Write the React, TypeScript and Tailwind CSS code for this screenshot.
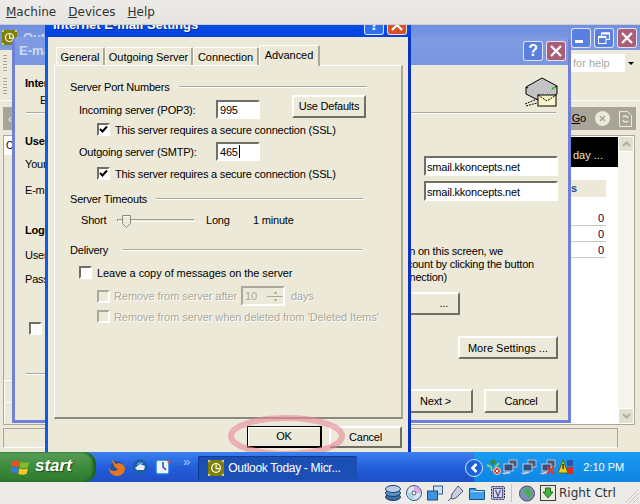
import type { ReactNode } from "react";

const sunken = "border-2 border-t-[#716f64] border-l-[#716f64] border-r-white border-b-white";
const raised = "border-2 border-t-white border-l-white border-r-[#716f64] border-b-[#716f64] flex items-center justify-center";

const OutlookIcon = ({ size = 15 }: { size?: number }) => (
  <svg width={size} height={size} viewBox="0 0 15 15" className="shrink-0">
    <rect width="15" height="15" fill="#7f7f00" />
    <path d="M0 0h2v2H0zM13 0h2v2h-2zM0 13h2v2H0zM13 13h2v2h-2z" fill="#c8c89a" />
    <circle cx="7.5" cy="7.5" r="4.6" fill="#fff" />
    <circle cx="7.5" cy="7.5" r="3.4" fill="#7f7f00" />
    <path d="M7 4.5h1.2v3h2.3v1.2H7z" fill="#fff" />
  </svg>
);

const TitleButton = ({ kind, tone, w = 20, h = 20 }: { kind: string; tone: string; w?: number; h?: number }) => (
  <div
    className={`flex items-center justify-center rounded-[3px] border border-white/80 text-white ${tone}`}
    style={{ width: w, height: h }}
  >
    {kind === "help" && <span className="font-['Liberation_Sans'] text-[16px] font-bold leading-none">?</span>}
    {kind === "close" && (
      <svg width="12" height="12" viewBox="0 0 12 12">
        <path d="M1 1l10 10M11 1L1 11" stroke="#fff" strokeWidth="2.2" />
      </svg>
    )}
    {kind === "min" && <div className="mt-[8px] h-[3px] w-[8px] -translate-x-[2px] bg-white" />}
    {kind === "max" && (
      <svg width="12" height="12" viewBox="0 0 12 12" fill="none" stroke="#fff">
        <rect x="3.5" y="1" width="8" height="6.5" strokeWidth="1" />
        <path d="M3.5 1.5h8" strokeWidth="2" />
        <rect x="0.5" y="4.5" width="7.5" height="7" fill="#5a7fe0" />
        <path d="M0.5 5h7.5" strokeWidth="2" />
      </svg>
    )}
  </div>
);

const CheckBox = ({ checked, disabled }: { checked?: boolean; disabled?: boolean }) => (
  <div
    className={`flex h-[13px] w-[13px] shrink-0 items-center justify-center border-2 border-r-white border-b-white ${
      disabled ? "border-t-[#aca899] border-l-[#aca899] bg-[#ece9d8]" : "border-t-[#716f64] border-l-[#716f64] bg-white"
    }`}
  >
    {checked && (
      <svg width="9" height="9" viewBox="0 0 9 9">
        <path d="M1 4l2.5 2.5L8 1.5" fill="none" stroke="#000" strokeWidth="2" />
      </svg>
    )}
  </div>
);

const Section = ({ title, className }: { title: string; className: string }) => (
  <div className="flex h-[14px] w-[297px] items-center">
    <span className="whitespace-nowrap">{title}</span>
    <div className={`h-[2px] flex-1 border-t border-t-[#aca899] border-b border-b-white ${className}`} />
  </div>
);

const PortField = ({ value, caret }: { value: string; caret?: boolean }) => (
  <div className={`flex h-[19px] w-[44px] items-center bg-white pl-[2px] ${sunken}`}>
    <span className="pt-[2px]">{value}</span>
    {caret && <div className="ml-px h-[13px] w-px bg-black" />}
  </div>
);

const ServerIcon = () => (
  <svg width="33" height="30" viewBox="0 0 33 30" className="shrink-0">
    <path d="M1 10L17 1l15 8v8L17 25 1 17z" fill="#c4c4c4" stroke="#000" />
    <path d="M1 10l16 8 15-9M17 18v7" fill="none" stroke="#000" />
    <path d="M3 11l14 7 13-8" fill="none" stroke="#fff" />
    <path d="M27 11l3-2v2l-3 2z" fill="#2fc02f" />
    <rect x="13" y="18" width="18" height="11" fill="#fbf6c8" stroke="#000" />
    <path d="M13 18l9 6 9-6" fill="none" stroke="#000" strokeDasharray="2 1" />
    <path d="M0 27l12-5M1 29l11-3" stroke="#000" strokeDasharray="2 1" />
  </svg>
);

const WinFlag = () => (
  <svg width="19" height="19" viewBox="0 0 19 19" className="shrink-0">
    <path d="M1 3.5c2.5-1.2 5-1.2 7.5 0L7.5 9C5 7.8 2.500 7.800 0 9z" fill="#e8502a" />
    <path d="M9.500 3.800c2.500 1.200 5.500 1.200 8.500 0l-1 5.500c-3 1.200-6 1.200-8.500 0z" fill="#7fbf2a" />
    <path d="M0 10c2.500-1.200 5-1.200 7.300 0l-1 5.500c-2.300-1.200-4.800-1.200-7.300 0z" fill="#3a7ae0" />
    <path d="M8.300 10.300c2.500 1.200 5.500 1.200 8.500 0l-1 5.500c-3 1.200-6 1.200-8.500 0z" fill="#f5c52a" />
  </svg>
);

const Pc = ({ cross }: { cross?: boolean }) => (
  <svg width="16" height="16" viewBox="0 0 16 16" className="shrink-0">
    <rect x="7" y="1" width="8" height="7" fill="#4a5a78" stroke="#c8d0dc" strokeWidth="0.8" />
    <rect x="2" y="5" width="9" height="7" fill="#33507e" stroke="#dfe4ec" strokeWidth="0.8" />
    <path d="M0 14l7-1.500 2 1.500-7 1.500z" fill="#c9ccd8" />
    {cross && <path d="M7 8l7 7M14 8l-7 7" stroke="#f03020" strokeWidth="2" />}
  </svg>
);

const Taskbar = () => (
  <div className="flex h-[30px] shrink-0 items-stretch bg-gradient-to-b from-[#3d82f0] via-[#245edb] to-[#1e4fc6] tracking-normal">
    <div className="flex w-[96px] shrink-0 items-center rounded-r-[12px] bg-gradient-to-b from-[#5a9f5a] via-[#3c8b3c] to-[#2f7a30] pl-[11px] shadow-[inset_-3px_0_3px_#1d5e1d]">
      <WinFlag />
      <span className="ml-[5px] pb-[2px] font-['Liberation_Sans'] text-[17px] font-bold italic text-white [text-shadow:1px_1px_1px_#1a4a1a]">
        start
      </span>
    </div>
    <div className="ml-[13px] flex items-center gap-[7px]">
      <svg width="16" height="17" viewBox="0 0 16 17" className="shrink-0">
        <circle cx="8" cy="9" r="7" fill="#2a4f9e" />
        <path d="M3 1c2 1 3 3 3 4 4-2 9 0 10 4 0 4-3 8-8 8-5 0-8-4-8-8 1 2 3 3 5 3 3 0 4-2 3-3-2 0-3-1-3-3-1-1-2-3-2-5z" fill="#e8761e" />
      </svg>
      <svg width="16" height="16" viewBox="0 0 16 16" className="shrink-0">
        <circle cx="8" cy="8" r="7.500" fill="#1d5ea8" />
        <path d="M3 9l5-4 5 2-1 4H5z" fill="#e8ecf4" />
        <path d="M5 6c1-2 4-3 6-1" stroke="#9fd0f0" fill="none" />
      </svg>
      <svg width="16" height="16" viewBox="0 0 16 16" className="shrink-0">
        <rect x="1" y="1" width="13" height="14" rx="2" fill="#f0f6ff" stroke="#1c7fe0" strokeWidth="1.500" />
        <path d="M8 3v5l3 3" stroke="#1c4fb0" strokeWidth="1.500" fill="none" />
        <circle cx="14" cy="3" r="1.500" fill="#e8502a" />
      </svg>
    </div>
    <div className="ml-[12px] mt-[3px] text-[13px] leading-none text-[#a8c8f8]">»</div>
    <div className="ml-[8px] mt-[4px] flex h-[24px] w-[159px] items-center gap-[4px] rounded-[2px] bg-[#1c4fb4] pl-[10px] text-[12px] tracking-[-0.3px] text-white shadow-[inset_1px_1px_1px_#123a8c]">
      <OutlookIcon size={16} />
      <span className="whitespace-nowrap">Outlook Today - Micr...</span>
    </div>
    <div className="relative ml-[117px] flex flex-1 items-center bg-gradient-to-b from-[#1a9bf0] to-[#0f85e4] pl-[12px] text-white">
      <div className="absolute -left-[9px] top-[7px] flex h-[18px] w-[18px] items-center justify-center rounded-full border border-[#cfe6ff] bg-[#1c62d8]">
        <svg width="9" height="10" viewBox="0 0 9 10">
          <path d="M6.500 1L2.500 5l4 4" fill="none" stroke="#fff" strokeWidth="2.500" />
        </svg>
      </div>
      <svg width="15" height="16" viewBox="0 0 15 16" className="shrink-0">
        <circle cx="7" cy="3" r="2.500" fill="#3a8a3a" />
        <path d="M1 6l4 2 1 4M13 4l-4 4" stroke="#7fd06a" strokeWidth="2" fill="none" />
        <circle cx="11" cy="12" r="3.500" fill="#e02a20" stroke="#fff" strokeWidth="0.8" />
        <path d="M9.500 10.500l3 3M12.500 10.500l-3 3" stroke="#fff" />
      </svg>
      <div className="ml-[1px] flex gap-[3px]">
        <Pc />
        <Pc />
        <Pc cross />
      </div>
      <svg width="16" height="16" viewBox="0 0 16 16" className="ml-[2px] shrink-0">
        <rect x="9" y="1" width="6" height="6" fill="#2f50a8" />
        <rect x="9" y="8" width="6" height="7" fill="#d8301f" />
        <path d="M5 1l5 13H0z" fill="#f4c81e" stroke="#3a7a1e" />
        <rect x="4.500" y="5" width="1.200" height="5" fill="#000" />
      </svg>
      <span className="ml-[9px] whitespace-nowrap text-[11px]">2:10 PM</span>
    </div>
  </div>
);

const StatusBar = () => (
  <div className="flex h-[22px] shrink-0 items-center bg-[#edebe7] pl-[385px] tracking-normal text-[#2e3436]">
    <div className="flex items-center gap-[5px]">
      <svg width="16" height="16" viewBox="0 0 16 16">
        <ellipse cx="8" cy="12" rx="7.500" ry="3.500" fill="#3a6ea5" stroke="#1d3f66" />
        <ellipse cx="8" cy="8" rx="7.500" ry="3.500" fill="#5a8fc8" stroke="#1d3f66" />
        <ellipse cx="8" cy="4" rx="7.500" ry="3.500" fill="#b8d0e8" stroke="#1d3f66" />
      </svg>
      <svg width="16" height="16" viewBox="0 0 16 16">
        <circle cx="8" cy="8" r="7.500" fill="#dfe4f0" stroke="#39537a" />
        <path d="M8 1a7 7 0 0 1 7 7H11a3 3 0 0 0-3-3z" fill="#d8a8e8" />
        <path d="M8 15a7 7 0 0 1-7-7h4a3 3 0 0 0 3 3z" fill="#a8d8e8" />
        <circle cx="8" cy="8" r="2" fill="#fff" stroke="#39537a" />
      </svg>
      <svg width="16" height="16" viewBox="0 0 16 16">
        <rect x="6.500" y="1" width="9" height="8" fill="#cfe0f2" stroke="#3b5d84" />
        <rect x="0.500" y="6" width="10" height="9" fill="#3f94e0" stroke="#234a78" />
      </svg>
      <svg width="16" height="16" viewBox="0 0 16 16">
        <path d="M10 1l5 5-7 7-4 1-1-1 1-4z" fill="#c9cfe0" stroke="#47577a" />
        <path d="M3 13l-3 3" stroke="#47577a" />
      </svg>
      <svg width="16" height="16" viewBox="0 0 16 16">
        <path d="M0.500 3.500h6l1 2h8v9h-15z" fill="#3f9fe8" stroke="#1f4f80" />
        <path d="M1.500 6.500h13" stroke="#bfe4fa" />
      </svg>
      <svg width="16" height="16" viewBox="0 0 16 16">
        <rect x="1.500" y="1.500" width="13" height="13" rx="1" fill="#b8b8e0" stroke="#2e3436" strokeDasharray="2 1" />
        <rect x="3.500" y="3.500" width="9" height="9" fill="#d8d8f0" stroke="#55558a" />
        <path d="M5.500 5l2.500 6 2.500-6" fill="none" stroke="#55558a" strokeWidth="1.300" />
      </svg>
    </div>
    <div className="ml-[5px] h-[18px] w-px bg-[#c4c2bc]" />
    <div className="ml-[7px] flex items-center gap-[5px]">
      <svg width="16" height="17" viewBox="0 0 16 17">
        <circle cx="8" cy="8.500" r="7.500" fill="#7f8fb0" stroke="#3f4f70" />
        <path d="M7 3c3 0 5 2 4 4l2 2-4 5-1-4-3-2z" fill="#3fb04a" />
      </svg>
      <svg width="16" height="16" viewBox="0 0 16 16">
        <rect x="0.500" y="0.500" width="15" height="15" fill="#eceadf" stroke="#3f3f3f" />
        <path d="M5.500 3h5v4h2.500L8 13 3 7h2.500z" fill="#3fb83f" stroke="#1f6f1f" />
      </svg>
    </div>
    <span className="ml-[3px] whitespace-nowrap font-['DejaVu_Sans'] text-[12px]">Right Ctrl</span>
    <svg width="16" height="16" viewBox="0 0 16 16" className="ml-auto self-end">
      <path d="M15 1L1 15M15 5L5 15M15 9L9 15M15 13L13 15" stroke="#c8c6c0" />
    </svg>
  </div>
);

const OutlookWindow = () => (
  <div className="absolute inset-0 flex flex-col bg-[#ece9d8]">
    <div className="flex h-[25px] shrink-0 items-center bg-gradient-to-b from-[#6f8fe0] to-[#7f9be0] pl-[2px] pr-[3px]">
      <OutlookIcon />
      <span className="ml-[6px] font-['Liberation_Sans'] text-[13px] font-bold tracking-normal text-[#c8d6f4]">Outlook Today</span>
      <div className="ml-auto flex gap-[3px]">
        <TitleButton kind="min" tone="bg-[#5a7fe0]" />
        <TitleButton kind="max" tone="bg-[#5a7fe0]" />
        <TitleButton kind="close" tone="bg-[#a8607a]" />
      </div>
    </div>
    <div className="flex h-[51px] shrink-0 justify-between border-b border-b-white pl-[3px] pr-[4px] pt-[4px]">
      <div className="mt-[1px] flex flex-col gap-[7px]">
        <div className="h-[16px] w-[4px] bg-[repeating-linear-gradient(#aca899_0_1px,transparent_1px_3px)]" />
        <div className="h-[18px] w-[4px] bg-[repeating-linear-gradient(#aca899_0_1px,transparent_1px_3px)]" />
      </div>
      <div className="flex h-[18px] w-[65px] items-center justify-between bg-white pl-[2px] tracking-normal text-[#aca899]">
        <span className="whitespace-nowrap">for help</span>
        <div className="flex h-full w-[11px] items-center justify-center bg-[#ece9d8]">
          <div className="h-0 w-0 border-x-[3px] border-t-[3px] border-x-transparent border-t-black" />
        </div>
      </div>
    </div>
    <div className="ml-[3px] mr-[4px] mt-[6px] flex h-[23px] shrink-0 items-center bg-[#a8a598] pl-[5px] pr-[4px] text-[#ece9d8]">
      <span className="text-[12px] leading-none">‹</span>
      <span className="ml-auto text-black">
        <u>G</u>o
      </span>
      <div className="ml-[9px] flex h-[15px] w-[15px] items-center justify-center rounded-full bg-[#ece9d8]">
        <svg width="7" height="7" viewBox="0 0 7 7">
          <path d="M1 1l5 5M6 1L1 6" stroke="#a8a598" strokeWidth="1.500" />
        </svg>
      </div>
      <svg width="13" height="16" viewBox="0 0 13 16" className="ml-[9px]">
        <path d="M0.500 0.500h8l4 4v11h-12z" fill="none" stroke="#ece9d8" />
        <path d="M4 6a3 3 0 0 1 5 1M9 10a3 3 0 0 1-5-1" fill="none" stroke="#ece9d8" strokeWidth="1.500" />
      </svg>
    </div>
    <div className="ml-[3px] mr-[5px] mt-[5px] flex h-[290px] shrink-0 border border-[#aca899]">
      <div className="flex w-[40px] shrink-0 flex-col justify-between">
        <div className="h-[19px] w-[9px] bg-white pl-[2px] text-[10px] leading-[19px]">C</div>
        <div className="flex flex-col gap-[1px] pb-[1px]">
          <div className="h-[21px] w-[9px] border-t border-l border-white" />
          <div className="h-[21px] w-[9px] border-t border-l border-white" />
        </div>
      </div>
      <div className="flex-1 bg-white pt-[1px]">
        <div className="ml-[527px] flex h-[30px] items-center bg-black pl-[2px] pt-[6px] tracking-normal text-[#f0e8c0]">day ...</div>
        <div className="ml-[527px] mt-[13px] h-[17px] w-[35px] bg-[#ece9d8] font-bold leading-[17px] text-[#1d4f9e]">s</div>
        <div className="ml-[527px] mt-[13px] w-[35px]">
          {[0, 1, 2].map((i) => (
            <div key={i} className="h-[16px] border-b border-b-[#c8c8c8] pr-[2px] text-right leading-[16px] text-[#000040]">
              0
            </div>
          ))}
        </div>
      </div>
      <div className="flex w-[16px] shrink-0 flex-col justify-between bg-[#f6f4ec]">
        <div className="flex h-[16px] items-center justify-center rounded-[2px] border border-white bg-[#e2dfd0] text-[#b0ad9f]">
          <svg width="9" height="6" viewBox="0 0 9 6">
            <path d="M1 5l3.500-3.500L8 5" fill="none" stroke="#b0ad9f" strokeWidth="2" />
          </svg>
        </div>
        <div className="flex h-[16px] items-center justify-center rounded-[2px] border border-white bg-[#e2dfd0]">
          <svg width="9" height="6" viewBox="0 0 9 6">
            <path d="M1 1l3.500 3.500L8 1" fill="none" stroke="#b0ad9f" strokeWidth="2" />
          </svg>
        </div>
      </div>
    </div>
    <div className="ml-[3px] mt-[3px] h-[20px] w-[615px] border border-[#aca899] border-b-white" />
  </div>
);

const WizardWindow = () => (
  <div className="absolute left-[12px] top-[12px] flex h-[386px] w-[559px] flex-col overflow-hidden rounded-t-[6px] border-x-[3px] border-b-[3px] border-[#7080d8] bg-[#ece9d8] text-black">
    <div className="-mx-[3px] flex h-[28px] shrink-0 items-center bg-gradient-to-b from-[#7f9be4] to-[#7a96de] pl-[7px] pr-[5px]">
      <span className="font-['Liberation_Sans'] text-[13px] font-bold tracking-normal text-[#cdd9f5]">E-mail Accounts</span>
      <div className="ml-auto flex gap-[3px]">
        <TitleButton kind="help" tone="bg-[#5a7fe0]" />
        <TitleButton kind="close" tone="bg-[#a8607a]" />
      </div>
    </div>
    <div className="flex h-[47px] shrink-0 justify-between pl-[10px] pr-[10px] pt-[12px]">
      <div>
        <div className="font-bold leading-[13px]">Internet E-mail Settings (POP3)</div>
        <div className="ml-[15px] mt-[4px] leading-[13px]">Each of these settings are required</div>
      </div>
      <ServerIcon />
    </div>
    <div className="ml-[11px] mr-[12px] h-[2px] shrink-0 border-t border-t-[#aca899] border-b border-b-white" />
    <div className="flex flex-1">
      <div className="flex-1 pl-[10px]">
        <div className="mt-[20px] font-bold leading-[14px]">User Information</div>
        <div className="mt-[9px] leading-[14px]">Your Name:</div>
        <div className="mt-[12px] leading-[14px]">E-mail Address:</div>
        <div className="mt-[26px] font-bold leading-[14px]">Logon Information</div>
        <div className="mt-[11px] leading-[14px]">User Name:</div>
        <div className="mt-[10px] leading-[14px]">Password:</div>
        <div className="ml-[4px] mt-[36px]">
          <CheckBox />
        </div>
        <div className="ml-px mt-[38px] h-[2px] w-[300px] border-t border-t-[#aca899] border-b border-b-white" />
      </div>
      <div className="flex w-[157px] shrink-0 flex-col items-end pr-[10px] pt-[42px]">
        <div className={`flex h-[20px] w-[134px] items-center bg-white pl-[1px] pt-[2px] ${sunken}`}>smail.kkoncepts.net</div>
        <div className={`mt-[5px] flex h-[20px] w-[134px] items-center bg-white pl-[1px] pt-[2px] ${sunken}`}>smail.kkoncepts.net</div>
        <div className="mt-[44px] flex w-[147px] flex-col leading-[13px]">
          <div className="flex justify-end whitespace-nowrap pr-[55px]">After filling out the information on this screen, we</div>
          <div className="flex justify-end whitespace-nowrap pr-[24px]">recommend you test your account by clicking the button</div>
          <div className="flex justify-end whitespace-nowrap pr-[111px]">below. (Requires network connection)</div>
        </div>
        <div className={`mr-[98px] mt-[8px] h-[23px] w-[140px] justify-end pr-[10px] ${raised}`}>...</div>
        <div className={`mt-[21px] h-[23px] w-[100px] pt-[2px] tracking-normal ${raised}`}>More Settings ...</div>
      </div>
    </div>
    <div className="relative h-[50px] shrink-0 pt-[14px]">
      <div className="flex justify-end gap-[11px] pr-[10px]">
        <div className={`h-[24px] w-[75px] ${raised}`}>Next &gt;</div>
        <div className={`h-[24px] w-[74px] ${raised}`}>Cancel</div>
      </div>
    </div>
  </div>
);

const DisabledText = ({ children }: { children: ReactNode }) => (
  <span className="whitespace-nowrap tracking-[-0.07px] text-[#aca899] [text-shadow:1px_1px_0_#fff]">{children}</span>
);

const SettingsDialog = () => (
  <div className="absolute -top-[17px] bottom-0 left-[45px] flex w-[366px] flex-col border-l-[3px] border-r-[3px] border-l-[#0b5be8] border-r-[#0a30c8] bg-[#ece9d8] text-black">
    <div className="-mx-[3px] flex h-[29px] shrink-0 items-center bg-gradient-to-b from-[#0a60f0] to-[#0440e0] pl-[8px] pr-[4px] pt-[5px]">
      <span className="font-['Liberation_Sans'] text-[13px] font-bold tracking-normal text-white [text-shadow:1px_1px_0_#0a2a90]">
        Internet E-mail Settings
      </span>
      <div className="ml-auto flex gap-[3px]">
        <TitleButton kind="help" tone="bg-[#2f6ff0]" />
        <TitleButton kind="close" tone="bg-[#d8502a]" />
      </div>
    </div>
    <div className="ml-[6px] mr-[5px] flex flex-1 flex-col pt-[8px]">
      <div className="relative z-10 flex h-[20px] items-end pl-[2px] tracking-[-0.05px]">
        {[
          ["General", "w-[49px]"],
          ["Outgoing Server", "w-[88px]"],
          ["Connection", "w-[66px]"],
        ].map(([label, w]) => (
          <div key={label} className={`flex h-[18px] items-center justify-center rounded-t-[2px] border-t border-l border-r-2 border-t-white border-l-white border-r-[#aca899] pt-[2px] ${w}`}>
            {label}
          </div>
        ))}
        <div className="-mb-px flex h-[21px] w-[61px] items-center justify-center rounded-t-[2px] border-t border-l border-r-2 border-t-white border-l-white border-r-[#aca899] bg-[#ece9d8] pb-[1px]">
          Advanced
        </div>
      </div>
      <div className="h-[354px] shrink-0 border border-b-2 border-r-2 border-t-white border-l-white border-r-[#aca899] border-b-[#8a887c] pl-[15px] pt-[14px]">
        <Section title="Server Port Numbers" className="ml-[9px]" />
        <div className="mt-px flex h-[24px] items-start">
          <div className="ml-[9px] mt-[5px] flex w-[137px] h-[19px] items-center whitespace-nowrap pt-[2px]">Incoming server (POP3):</div>
          <div className="mt-[5px]">
            <PortField value="995" />
          </div>
          <div className={`ml-[32px] h-[23px] w-[74px] ${raised}`}>Use Defaults</div>
        </div>
        <div className="ml-[27px] mt-[4px] flex h-[13px] items-center gap-[5px] whitespace-nowrap">
          <CheckBox checked />
          <span className="pt-[2px]">This server requires a secure connection (SSL)</span>
        </div>
        <div className="mt-[6px] flex h-[19px] items-center">
          <div className="ml-[9px] w-[137px] whitespace-nowrap pt-[2px]">Outgoing server (SMTP):</div>
          <PortField value="465" caret />
        </div>
        <div className="ml-[27px] mt-[6px] flex h-[13px] items-center gap-[5px] whitespace-nowrap">
          <CheckBox checked />
          <span className="pt-[2px]">This server requires a secure connection (SSL)</span>
        </div>
        <div className="mt-[12px]">
          <Section title="Server Timeouts" className="ml-[9px] mr-[4px]" />
        </div>
        <div className="ml-[11px] mt-[6px] flex h-[16px] items-center">
          <span className="w-[36px]">Short</span>
          <div className="relative h-[3px] w-[78px] border-t border-l border-t-[#9a988c] border-l-[#9a988c] border-b border-r border-b-white border-r-white">
            <svg width="9" height="13" viewBox="0 0 9 13" className="absolute -top-[5px] left-[4px]">
              <path d="M0.500 0.500h8v8l-4 4-4-4z" fill="#ece9d8" stroke="#8a887c" />
              <path d="M1.500 1.500h6" stroke="#fff" />
            </svg>
          </div>
          <span className="ml-[11px] w-[47px]">Long</span>
          <span className="whitespace-nowrap">1 minute</span>
        </div>
        <div className="mt-[15px]">
          <Section title="Delivery" className="ml-[15px] mr-[5px]" />
        </div>
        <div className="ml-[9px] mt-[9px] flex h-[13px] items-center gap-[5px] whitespace-nowrap tracking-[-0.07px]">
          <CheckBox />
          <span className="pt-[2px]">Leave a copy of messages on the server</span>
        </div>
        <div className="ml-[27px] mt-[7px] flex h-[20px] items-center">
          <CheckBox disabled />
          <span className="ml-[4px] w-[127px]">
            <DisabledText>Remove from server after</DisabledText>
          </span>
          <div className="flex h-[20px] w-[44px] items-center justify-between border-2 border-t-[#aca899] border-l-[#aca899] border-r-white border-b-white pl-[2px] text-[#aca899]">
            10
            <div className="flex h-full w-[16px] flex-col">
              <div className="flex flex-1 items-center justify-center border-b border-b-[#aca899] text-[6px] leading-none">▴</div>
              <div className="flex flex-1 items-center justify-center text-[6px] leading-none">▾</div>
            </div>
          </div>
          <span className="ml-[6px]">
            <DisabledText>days</DisabledText>
          </span>
        </div>
        <div className="ml-[27px] mt-[4px] flex h-[13px] items-center gap-[4px]">
          <CheckBox disabled />
          <span className="pt-[2px]">
            <DisabledText>Remove from server when deleted from 'Deleted Items'</DisabledText>
          </span>
        </div>
      </div>
      <div className="mt-[7px] flex justify-end gap-[7px] pr-px">
        <div className="flex h-[22px] w-[75px] items-center justify-center border border-black border-b-2 border-r-2 shadow-[inset_1px_1px_0_#fff]">OK</div>
        <div className={`h-[22px] w-[73px] ${raised}`}>Cancel</div>
      </div>
    </div>
  </div>
);

export default function App() {
  return (
    <div className="flex h-[504px] w-[640px] flex-col overflow-hidden bg-[#edebe7] font-['Liberation_Sans',sans-serif] text-[11px] tracking-[-0.2px]">
      <div className="flex h-[25px] shrink-0 items-center gap-[12px] border-b border-b-[#d0cec8] bg-gradient-to-b from-[#edebe7] to-[#e6e4df] pl-[6px] font-['DejaVu_Sans'] text-[12px] tracking-normal text-[#2e3436]">
        <span><u>M</u>achine</span>
        <span><u>D</u>evices</span>
        <span><u>H</u>elp</span>
      </div>
      <div className="relative flex-1 overflow-hidden">
        <OutlookWindow />
        <WizardWindow />
        <SettingsDialog />
        <svg width="640" height="427" className="pointer-events-none absolute inset-0">
          <ellipse cx="286.500" cy="411" rx="55.500" ry="18" fill="none" stroke="#e88a9c" strokeOpacity="0.6" strokeWidth="6" />
        </svg>
      </div>
      <Taskbar />
      <StatusBar />
    </div>
  );
}
